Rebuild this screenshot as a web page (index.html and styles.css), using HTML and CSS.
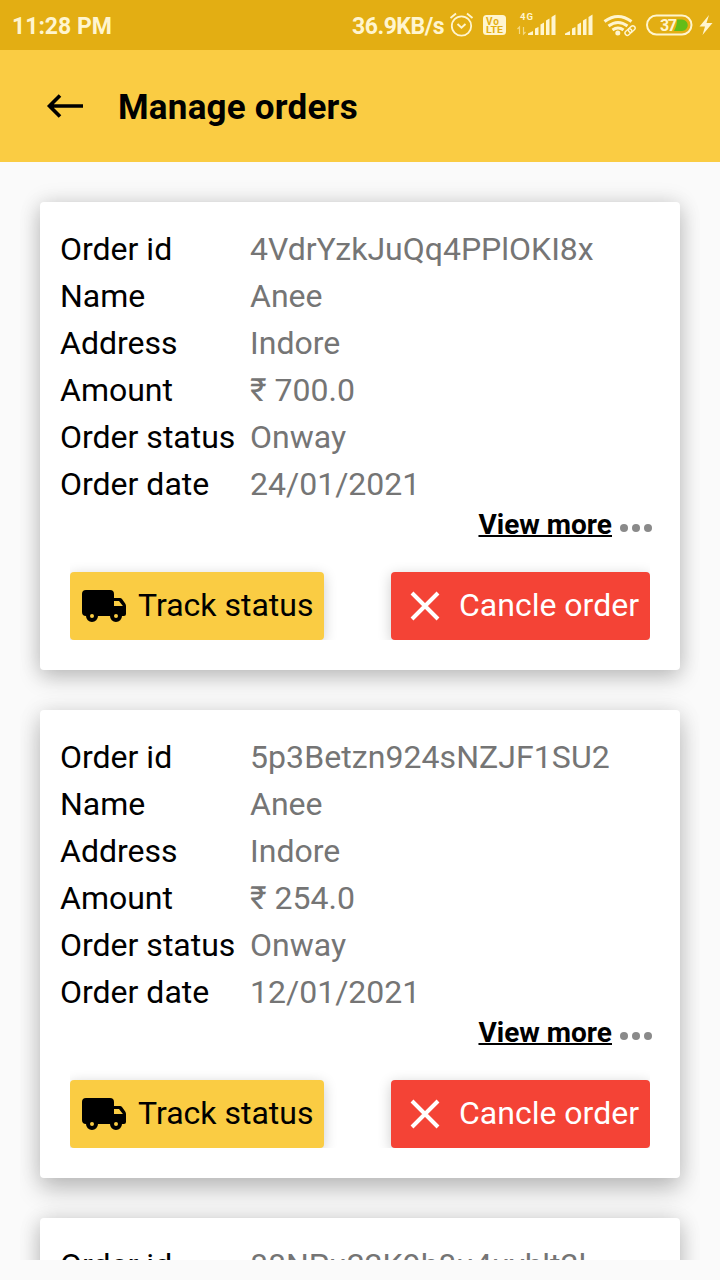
FILE: index.html
```html
<!DOCTYPE html>
<html lang="en">
<head>
<meta charset="utf-8">
<title>Manage orders</title>
<link rel="stylesheet" href="styles.css">
</head>
<body>
<svg class="sprite" aria-hidden="true">
  <symbol id="truck" viewBox="0 0 24 24"><path fill-rule="evenodd" d="M3 4h12q2 0 2 2v2h3q.6 0 1 .5l1.600 2.200q.4.5.4 1.300v4q0 1-1 1h-1a3 3 0 0 1-6 0H9a3 3 0 0 1-6 0q-2 0-2-2V6q0-2 2-2M17 9.500V12h4.460L19.500 9.500zM6 16a1 1 0 1 0 0 2 1 1 0 1 0 0-2m12 0a1 1 0 1 0 0 2 1 1 0 1 0 0-2z"/></symbol>
</svg>
<header class="status">
  <span class="clock">11:28 PM</span>
  <span class="speed">36.9KB/s</span>
  <svg class="tray" width="276" height="50" viewBox="444 0 276 50" fill="none" stroke="#fff5cf">
    <circle cx="461.500" cy="26" r="9.700" stroke-width="1.800"/>
    <path d="M457.500 24l4 3.800 4-3.800M450.500 18l5.500-4.500M467 13.500l5.500 4.500" stroke-width="1.900"/>
    <rect x="483" y="15" width="23" height="20" rx="3.500" fill="#fff5cf" stroke="none"/>
    <g fill="#e3ae13" stroke="none" font-family="Roboto, sans-serif" font-weight="700">
      <text x="486" y="24.500" font-size="10" textLength="13">Vo</text>
      <text x="486" y="33" font-size="9" textLength="17" lengthAdjust="spacingAndGlyphs">LTE</text>
    </g>
    <text x="520" y="20" font-size="9.500" font-weight="700" font-family="Roboto, sans-serif" fill="#fff5cf" stroke="none" textLength="13">4G</text>
    <path d="M519.500 34v-7l-2 2M523.500 27v7l2-2" stroke-width="1.200" opacity=".6"/>
    <g fill="#fff5cf" stroke="none">
      <path id="bars" d="M528 35v-1.500l5-2.500v4zM535 28.500l3.500-1.500v8H535zM540.500 24.500l3.500-2v12.500h-3.500zM546 20.500l3.500-2V35H546zM551.500 17l4-2.500V35h-4z"/>
      <use href="#bars" x="37"/>
    </g>
    <path d="M604.500 21.500q13.500-10 27 0M608.500 26q9.500-7 19 0M612.500 30q5.500-4 11 0" stroke-width="3"/>
    <circle cx="617.800" cy="33" r="2.500" fill="#fff5cf" stroke="none"/>
    <g stroke-width="1.400" transform="rotate(-42 630 30.500)">
      <rect x="624" y="28.300" width="7.500" height="4.600" rx="2.300"/>
      <rect x="628.500" y="28.300" width="7.500" height="4.600" rx="2.300"/>
    </g>
    <path d="M676 19.500h6a5.500 5.500 0 0 1 0 11.500h-8q3-5 3-11.500" fill="#63bd18" stroke="none"/>
    <rect x="647" y="15.500" width="44.500" height="19" rx="9.500" stroke-width="2"/>
    <text x="660" y="30.500" font-size="16" font-weight="700" font-family="Roboto, sans-serif" fill="#fff5cf" stroke="none" textLength="17">37</text>
    <path d="M709 15l-9.500 11.500h5.500l-2.500 8.500 10-12h-6z" fill="#fff5cf" stroke="none"/>
  </svg>
</header>
<div class="appbar">
  <svg class="back" width="38" height="28" viewBox="0 0 38 28"><path d="M14 3.500L3.500 14 14 24.500M3.500 14H37" fill="none" stroke="#000" stroke-width="3.600"/></svg>
  <h1 class="title">Manage orders</h1>
</div>
<main class="list">
  <article class="card">
    <dl class="details">
      <dt>Order id</dt><dd>4VdrYzkJuQq4PPlOKI8x</dd>
      <dt>Name</dt><dd>Anee</dd>
      <dt>Address</dt><dd>Indore</dd>
      <dt>Amount</dt><dd>₹ 700.0</dd>
      <dt>Order status</dt><dd>Onway</dd>
      <dt>Order date</dt><dd>24/01/2021</dd>
    </dl>
    <div class="more"><a class="link">View more</a><span class="dots"><i></i><i></i><i></i></span></div>
    <div class="actions">
      <button class="btn track"><svg class="truck"><use href="#truck"/></svg><span class="label">Track status</span></button>
      <button class="btn cancel"><svg class="cross" viewBox="0 0 30 30"><path d="M2 2l26 26M28 2L2 28"/></svg><span class="label">Cancle order</span></button>
    </div>
  </article>
  <article class="card raised">
    <dl class="details">
      <dt>Order id</dt><dd class="wide">5p3Betzn924sNZJF1SU2</dd>
      <dt>Name</dt><dd>Anee</dd>
      <dt>Address</dt><dd>Indore</dd>
      <dt>Amount</dt><dd>₹ 254.0</dd>
      <dt>Order status</dt><dd>Onway</dd>
      <dt>Order date</dt><dd>12/01/2021</dd>
    </dl>
    <div class="more"><a class="link">View more</a><span class="dots"><i></i><i></i><i></i></span></div>
    <div class="actions">
      <button class="btn track"><svg class="truck"><use href="#truck"/></svg><span class="label">Track status</span></button>
      <button class="btn cancel"><svg class="cross" viewBox="0 0 30 30"><path d="M2 2l26 26M28 2L2 28"/></svg><span class="label">Cancle order</span></button>
    </div>
  </article>
  <article class="card">
    <dl class="details">
      <dt>Order id</dt><dd>88NPu22K9h8u4uyhlt2l</dd>
    </dl>
  </article>
</main>
</body>
</html>
```
FILE: styles.css
```css
* { box-sizing: border-box; }
body {
  margin: 0;
  width: 720px;
  height: 1280px;
  overflow: hidden;
  background: #fafafa;
  font-family: Roboto, sans-serif;
  color: #000;
}
.sprite { display: none; }
.status {
  display: flex;
  align-items: center;
  height: 50px;
  padding-left: 12px;
  background: #e3ae13;
  color: #fff5cf;
  font-size: 23px;
  font-weight: 700;
  line-height: 50px;
  white-space: nowrap;
}
.clock { padding-top: 3px; }
.speed { margin-left: auto; padding-top: 3px; letter-spacing: -.5px; }
.tray { flex: none; }
.appbar {
  display: flex;
  align-items: center;
  gap: 34px;
  height: 112px;
  padding-left: 46px;
  background: #facc43;
}
.title {
  margin: 0;
  padding-top: 2px;
  font-size: 35px;
  font-weight: 700;
  line-height: 41px;
  letter-spacing: .22px;
}
.list {
  display: flex;
  flex-direction: column;
  gap: 40px;
  height: 1078px;
  margin: 20px 20px 0;
  padding: 20px;
  overflow: hidden;
}
.card {
  flex: none;
  height: 468px;
  padding: 24px 20px 0;
  border-radius: 4px;
  background: #fff;
  box-shadow: 0 8px 22px rgba(0, 0, 0, .2), 0 0 22px rgba(0, 0, 0, .12);
}
.raised { box-shadow: 0 12px 24px rgba(0, 0, 0, .22), 0 0 22px rgba(0, 0, 0, .1); }
.details {
  display: grid;
  grid-template-columns: 190px 1fr;
  grid-auto-rows: 47px;
  margin: 0;
  font-size: 32px;
  line-height: 47px;
  white-space: nowrap;
}
.details dd { margin: 0; color: #757575; }
.details .wide { letter-spacing: .07px; }
.more {
  display: flex;
  justify-content: flex-end;
  gap: 8px;
  height: 54px;
  padding-right: 8px;
}
.link {
  font-size: 28px;
  font-weight: 700;
  line-height: 33px;
  text-decoration: underline;
  text-decoration-thickness: 2px;
}
.dots { display: flex; gap: 4px; padding-top: 16px; }
.dots i { width: 8px; height: 8px; border-radius: 50%; background: #8a8a8a; }
.actions {
  display: flex;
  justify-content: space-between;
  height: 78px;
  margin: 0 10px;
  padding-top: 10px;
  overflow: hidden;
}
.btn {
  display: flex;
  align-items: center;
  height: 68px;
  border: 0;
  border-radius: 4px;
  font: 32px/38px Roboto, sans-serif;
  white-space: nowrap;
  box-shadow: 0 3px 14px rgba(0, 0, 0, .2);
}
.label { padding-bottom: 2px; }
.track { width: 254px; padding: 0 0 0 10px; gap: 10px; background: #facc43; color: #000; }
.cancel { width: 259px; padding: 0 0 0 19px; gap: 19px; background: #f44336; color: #fff; }
.truck { flex: none; width: 48px; height: 48px; }
.cross { flex: none; width: 30px; height: 30px; fill: none; stroke: #fff; stroke-width: 4; }
```
